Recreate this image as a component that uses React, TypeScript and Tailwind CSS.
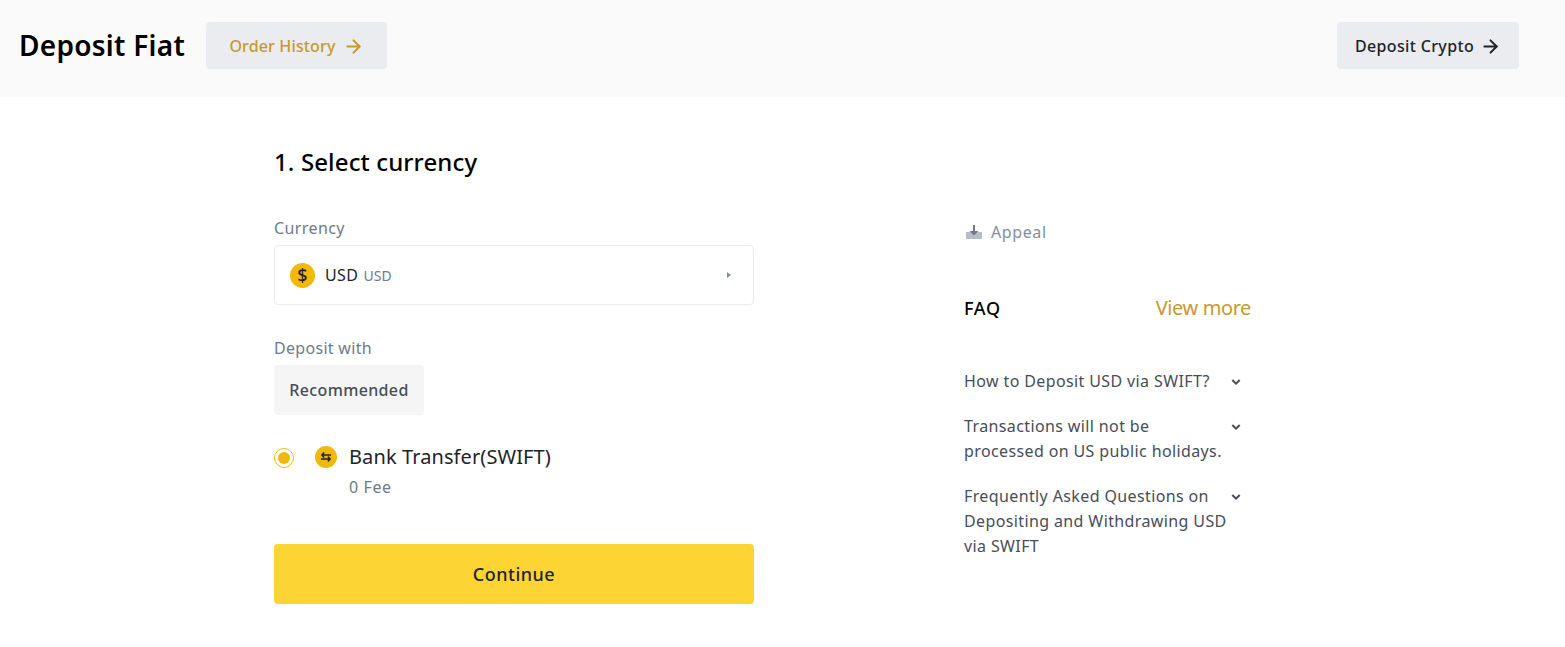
import { ArrowRight } from "lucide-react";

const faqs = [
  { lines: ["How to Deposit USD via SWIFT?"], mb: "mb-[20px]" },
  { lines: ["Transactions will not be", "processed on US public holidays."], mb: "mb-[20px]" },
  { lines: ["Frequently Asked Questions on", "Depositing and Withdrawing USD", "via SWIFT"], mb: "" },
];

function Chevron() {
  return (
    <svg width="10" height="10" viewBox="0 0 10 10" className="mt-[8px] shrink-0 text-[#474d57]" fill="none">
      <path d="M1.3 3 5 6.7 8.7 3" stroke="currentColor" strokeWidth="2" />
    </svg>
  );
}

export default function App() {
  return (
    <div className="min-h-[647px] bg-white font-['Noto_Sans',sans-serif] text-[#1e2329]">
      <header className="flex h-[97px] items-center justify-between bg-[#fafafa] pb-[6px] pl-[19px] pr-[46px]">
        <div className="flex items-center">
          <h1 className="w-[187px] pb-[1px] text-[28px] leading-[36px] font-semibold tracking-[0.27px] text-black">Deposit Fiat</h1>
          <button className="flex h-[47px] w-[181px] items-center justify-center gap-[7px] rounded bg-[#eaecef] pt-[1px] text-[16px] font-medium tracking-[0.15px] text-[#c8992b]">
            Order History
            <ArrowRight size={21} strokeWidth={2.3} />
          </button>
        </div>
        <button className="flex h-[47px] w-[182px] items-center justify-center gap-[6px] rounded bg-[#eaecef] pt-[1px] text-[16px] font-medium tracking-[0.35px] text-[#1e2329]">
          Deposit Crypto
          <ArrowRight size={21} strokeWidth={2.3} />
        </button>
      </header>

      <main className="flex pl-[274px]">
        <section className="w-[480px]">
          <h2 className="mt-[49px] text-[24px] leading-[32px] font-medium tracking-[0.13px] text-black">1. Select currency</h2>

          <div className="mt-[38px] text-[16px] leading-[24px] tracking-[0.4px] text-[#707a8a]">Currency</div>
          <div className="mt-[5px] flex h-[60px] items-center rounded border border-[#eaecef] pl-[15px] pr-[21px]">
            <span className="flex h-[25px] w-[25px] items-center justify-center rounded-full bg-[#f0b90b] text-[18px] leading-none font-medium text-[#1e2329]">$</span>
            <span className="ml-[10px] text-[16px] tracking-[0.4px]">USD</span>
            <span className="ml-[5px] text-[14px] tracking-[0.15px] text-[#707a8a]">USD</span>
            <svg width="6" height="8" viewBox="0 0 6 8" className="ml-auto text-[#848e9c]">
              <path d="M1 1l4 3-4 3z" fill="currentColor" />
            </svg>
          </div>

          <div className="mt-[31px] text-[16px] leading-[24px] tracking-[0.3px] text-[#707a8a]">Deposit with</div>
          <div className="mt-[5px] flex h-[50px] w-[150px] items-center justify-center rounded bg-[#f5f5f5] text-[16px] font-medium tracking-[0.35px] text-[#474d57]">
            Recommended
          </div>

          <div className="mt-[28px] flex">
            <span className="mt-[5px] flex h-[20px] w-[20px] items-center justify-center rounded-full border border-[#f0b90b]">
              <span className="h-[12px] w-[12px] rounded-full bg-[#f0b90b]" />
            </span>
            <span className="mt-[3px] ml-[21px] flex h-[22px] w-[22px] items-center justify-center rounded-full bg-[#f0b90b]">
              <svg width="12" height="12" viewBox="0 0 12 12" fill="none" stroke="#1e2329" strokeWidth="1.4">
                <path d="M11 4H2M4.2 1.6 1.8 4l2.4 2.4" />
                <path d="M1 8h9M7.8 5.6 10.2 8l-2.4 2.4" />
              </svg>
            </span>
            <div className="ml-[12px]">
              <div className="text-[20px] leading-[28px] tracking-[0.1px]">Bank Transfer(SWIFT)</div>
              <div className="mt-[4px] text-[16px] leading-[24px] tracking-[0.6px] text-[#707a8a]">0 Fee</div>
            </div>
          </div>

          <button className="mt-[45px] h-[60px] w-full rounded bg-[#fcd535] text-[18px] font-medium tracking-[0.5px] text-[#1e2329]">
            Continue
          </button>
        </section>

        <aside className="ml-[210px] w-[287px]">
          <div className="mt-[122px] flex h-[26px] items-center text-[16px] tracking-[0.6px] text-[#848e9c]">
            <svg width="16" height="16" viewBox="0 0 16 16" className="ml-[2px]">
              <path d="M0 8h16v7H0z" fill="#b7bdc6" />
              <path d="M7 1h2v6h3.5L8 11.5 3.5 7H7z" fill="#707a8a" />
            </svg>
            <span className="ml-[9px]">Appeal</span>
          </div>

          <div className="mt-[49px] flex items-center justify-between">
            <span className="text-[18px] leading-[28px] font-medium tracking-[0.7px] text-black">FAQ</span>
            <span className="text-[20px] leading-[28px] tracking-[-0.4px] text-[#c8992b]">View more</span>
          </div>

          <div className="mt-[47px] w-[277px]">
            {faqs.map((f) => (
              <div key={f.lines[0]} className={`flex justify-between ${f.mb}`}>
                <div className="text-[16px] leading-[25px] tracking-[0.38px] text-[#474d57]">
                  {f.lines.map((l) => (
                    <div key={l}>{l}</div>
                  ))}
                </div>
                <Chevron />
              </div>
            ))}
          </div>
        </aside>
      </main>
    </div>
  );
}
